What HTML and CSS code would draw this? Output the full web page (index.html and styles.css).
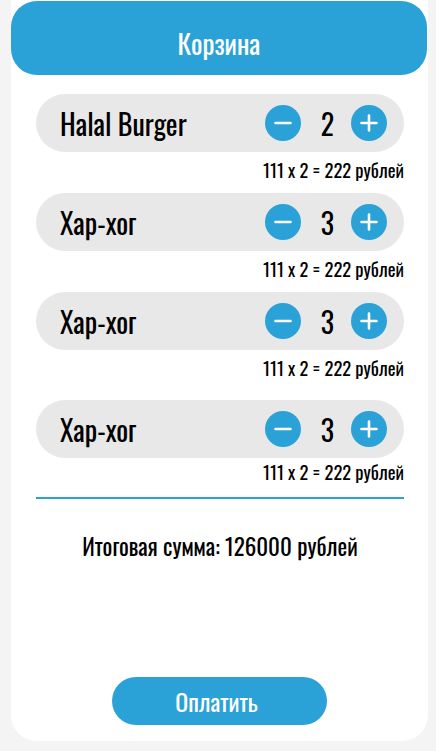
FILE: index.html
```html
<!DOCTYPE html>
<html lang="ru">
<head>
<meta charset="utf-8">
<title>Корзина</title>
<link rel="stylesheet" href="styles.css">
</head>
<body>
<div class="cart">
  <header class="cart-header">Корзина</header>
  <div class="items">
    <div class="item">
      <div class="row">
        <span class="name">Halal Burger</span>
        <div class="controls">
          <button class="btn" aria-label="minus"><svg viewBox="0 0 36 36" width="36" height="36"><circle cx="18" cy="18" r="18" fill="#2ba2d7"/><path d="M10.5 18h15" stroke="#fff" stroke-width="2.6" stroke-linecap="round"/></svg></button>
          <span class="qty">2</span>
          <button class="btn" aria-label="plus"><svg viewBox="0 0 36 36" width="36" height="36"><circle cx="18" cy="18" r="18" fill="#2ba2d7"/><path d="M10.5 18h15M18 10.5v15" stroke="#fff" stroke-width="2.6" stroke-linecap="round"/></svg></button>
        </div>
      </div>
      <div class="price">111 x 2 = 222 рублей</div>
    </div>
    <div class="item">
      <div class="row">
        <span class="name">Хар-хог</span>
        <div class="controls">
          <button class="btn" aria-label="minus"><svg viewBox="0 0 36 36" width="36" height="36"><circle cx="18" cy="18" r="18" fill="#2ba2d7"/><path d="M10.5 18h15" stroke="#fff" stroke-width="2.6" stroke-linecap="round"/></svg></button>
          <span class="qty">3</span>
          <button class="btn" aria-label="plus"><svg viewBox="0 0 36 36" width="36" height="36"><circle cx="18" cy="18" r="18" fill="#2ba2d7"/><path d="M10.5 18h15M18 10.5v15" stroke="#fff" stroke-width="2.6" stroke-linecap="round"/></svg></button>
        </div>
      </div>
      <div class="price">111 x 2 = 222 рублей</div>
    </div>
    <div class="item">
      <div class="row">
        <span class="name">Хар-хог</span>
        <div class="controls">
          <button class="btn" aria-label="minus"><svg viewBox="0 0 36 36" width="36" height="36"><circle cx="18" cy="18" r="18" fill="#2ba2d7"/><path d="M10.5 18h15" stroke="#fff" stroke-width="2.6" stroke-linecap="round"/></svg></button>
          <span class="qty">3</span>
          <button class="btn" aria-label="plus"><svg viewBox="0 0 36 36" width="36" height="36"><circle cx="18" cy="18" r="18" fill="#2ba2d7"/><path d="M10.5 18h15M18 10.5v15" stroke="#fff" stroke-width="2.6" stroke-linecap="round"/></svg></button>
        </div>
      </div>
      <div class="price">111 x 2 = 222 рублей</div>
    </div>
    <div class="item item-last">
      <div class="row">
        <span class="name">Хар-хог</span>
        <div class="controls">
          <button class="btn" aria-label="minus"><svg viewBox="0 0 36 36" width="36" height="36"><circle cx="18" cy="18" r="18" fill="#2ba2d7"/><path d="M10.5 18h15" stroke="#fff" stroke-width="2.6" stroke-linecap="round"/></svg></button>
          <span class="qty">3</span>
          <button class="btn" aria-label="plus"><svg viewBox="0 0 36 36" width="36" height="36"><circle cx="18" cy="18" r="18" fill="#2ba2d7"/><path d="M10.5 18h15M18 10.5v15" stroke="#fff" stroke-width="2.6" stroke-linecap="round"/></svg></button>
        </div>
      </div>
      <div class="price">111 x 2 = 222 рублей</div>
    </div>
    <div class="divider"></div>
    <div class="total">Итоговая сумма: 126000 рублей</div>
  </div>
  <div class="pay-wrap"><button class="pay">Оплатить</button></div>
</div>
</body>
</html>
```

FILE: styles.css
```css
* { box-sizing: border-box; }
html, body { margin: 0; padding: 0; }
body {
  background: #f4f4f4;
  font-family: "Oswald", "Liberation Sans Narrow", "Roboto Condensed", "DejaVu Sans Condensed", sans-serif;
  font-weight: 400;
  color: #000;
}
.cart {
  margin: 0 0 0 11px;
  width: 417px;
  height: 741px;
  background: #fff;
  border-radius: 0 0 26px 26px;
  display: flex;
  flex-direction: column;
}
.cart-header {
  margin-top: 1px;
  height: 74px;
  width: 416px;
  background: #2ba2d7;
  border-radius: 26px;
  color: #fff;
  font-size: 27px;
  display: flex;
  align-items: center;
  justify-content: center;
  padding-top: 9px;
}
.items {
  padding: 19px 24px 0 25px;
  display: flex;
  flex-direction: column;
}
.row {
  height: 58px;
  background: #e8e8e8;
  border-radius: 29px;
  display: flex;
  align-items: center;
  justify-content: space-between;
  padding: 0 17px 0 24px;
}
.name { font-size: 28px; }
.controls {
  display: flex;
  align-items: center;
}
.btn {
  border: 0;
  padding: 0;
  background: none;
  width: 36px;
  height: 36px;
  display: block;
}
.btn svg { display: block; }
.qty {
  width: 50px;
  text-align: center;
  font-size: 28px;
  padding-left: 3px;
}
.price {
  height: 41px;
  text-align: right;
  font-size: 18.5px;
  padding-top: 4px;
}
.item-last { margin-top: 9px; }
.item-last .price { height: 39px; padding-top: 0; }
.divider {
  height: 2px;
  background: #2ba2d7;
}
.total {
  text-align: center;
  font-size: 23px;
  margin-top: 30px;
}
.pay-wrap {
  margin-top: auto;
  padding-bottom: 16px;
  display: flex;
  justify-content: center;
}
.pay {
  width: 215px;
  height: 48px;
  border: 0;
  border-radius: 24px;
  background: #2ba2d7;
  color: #fff;
  font-family: inherit;
  font-weight: 400;
  font-size: 24px;
  padding: 0 6px 0 0;
}
```
